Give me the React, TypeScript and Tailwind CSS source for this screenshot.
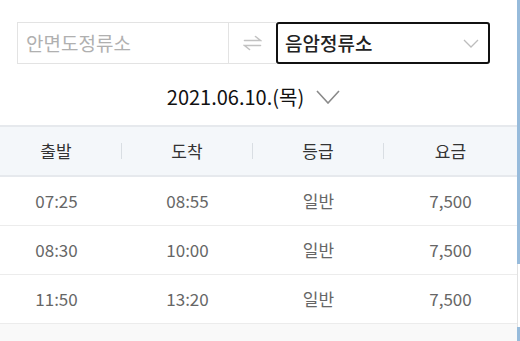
import {FC} from 'react'

const font = {fontFamily: '"Noto Sans CJK KR", "Noto Sans", sans-serif'}

const rows = [
  {dep: '07:25', arr: '08:55', grade: '일반', fare: '7,500'},
  {dep: '08:30', arr: '10:00', grade: '일반', fare: '7,500'},
  {dep: '11:50', arr: '13:20', grade: '일반', fare: '7,500'},
]

const SwapIcon = () => (
  <svg width="19" height="16" viewBox="0 0 19 16" fill="none" stroke="#c2c2c2" strokeWidth="1.6" strokeLinecap="round">
    <path d="M1.5 5.5H17.5L12.5 1.5" />
    <path d="M17.5 10.5H1.5L6.5 14.5" />
  </svg>
)

const Chevron: FC<{w: number; h: number; color: string; stroke: number}> = ({w, h, color, stroke}) => (
  <svg width={w} height={h} viewBox={`0 0 ${w} ${h}`} fill="none" stroke={color} strokeWidth={stroke}>
    <path d={`M1 1L${w / 2} ${h - 1}L${w - 1} 1`} />
  </svg>
)

const Search = () => (
  <div className="flex h-[42px] w-[473px]">
    <div className="flex w-[212px] items-center border border-[#e3e3e3] pl-[8px] text-[19px] text-[#b0b0b0]">
      안면도정류소
    </div>
    <div className="flex w-[47px] items-center justify-center border-y border-[#e3e3e3]">
      <SwapIcon />
    </div>
    <div className="flex w-[214px] items-center justify-between rounded-[3px] border-2 border-[#111] pl-[7px] pr-[9px]">
      <span className="text-[19px] font-medium text-[#222]">음암정류소</span>
      <Chevron w={16} h={9} color="#bdbdbd" stroke={1.3} />
    </div>
  </div>
)

const DateRow = () => (
  <div className="flex h-[61px] w-[473px] items-center justify-center gap-[12px] pt-[5px]">
    <span className="text-[20px] text-[#111]">2021.06.10.(목)</span>
    <Chevron w={24} h={14} color="#8a8a8a" stroke={1.6} />
  </div>
)

const Sep = () => (
  <div className="flex items-center">
    <div className="h-[16px] w-px bg-[#d9dee3]" />
  </div>
)

const Table = () => (
  <div className="-ml-[9px] flex w-[526px] flex-1 flex-col bg-[#f9f9f9]">
    <div className="grid h-[52px] grid-cols-[130px_1px_130px_1px_130px_1px_133px] border-y-2 border-[#e6e9ed] bg-[#f4f7fa] text-[17px] text-[#333]">
      <div className="flex items-center justify-center">출발</div>
      <Sep />
      <div className="flex items-center justify-center">도착</div>
      <Sep />
      <div className="flex items-center justify-center">등급</div>
      <Sep />
      <div className="flex items-center justify-center">요금</div>
    </div>
    {rows.map((r) => (
      <div
        key={r.dep}
        className="grid h-[49px] grid-cols-[131px_131px_131px_133px] border-b border-[#ececec] bg-white text-[17px] text-[#666]"
      >
        <div className="flex items-center justify-center">{r.dep}</div>
        <div className="flex items-center justify-center">{r.arr}</div>
        <div className="flex items-center justify-center">{r.grade}</div>
        <div className="flex items-center justify-center">{r.fare}</div>
      </div>
    ))}
  </div>
)

export default function App() {
  return (
    <div className="flex h-[341px] w-[520px] overflow-hidden bg-white" style={font}>
      <div className="flex w-[517px] flex-col">
        <div className="px-[17px] pt-[22px]">
          <Search />
          <DateRow />
        </div>
        <Table />
      </div>
      <div className="flex w-[3px] flex-col">
        <div className="h-[264px] bg-[#97bbdb]" />
        <div className="h-[63px] border-l border-[#e2e2e2] bg-white" />
        <div className="flex-1 bg-[#97bbdb]" />
      </div>
    </div>
  )
}
